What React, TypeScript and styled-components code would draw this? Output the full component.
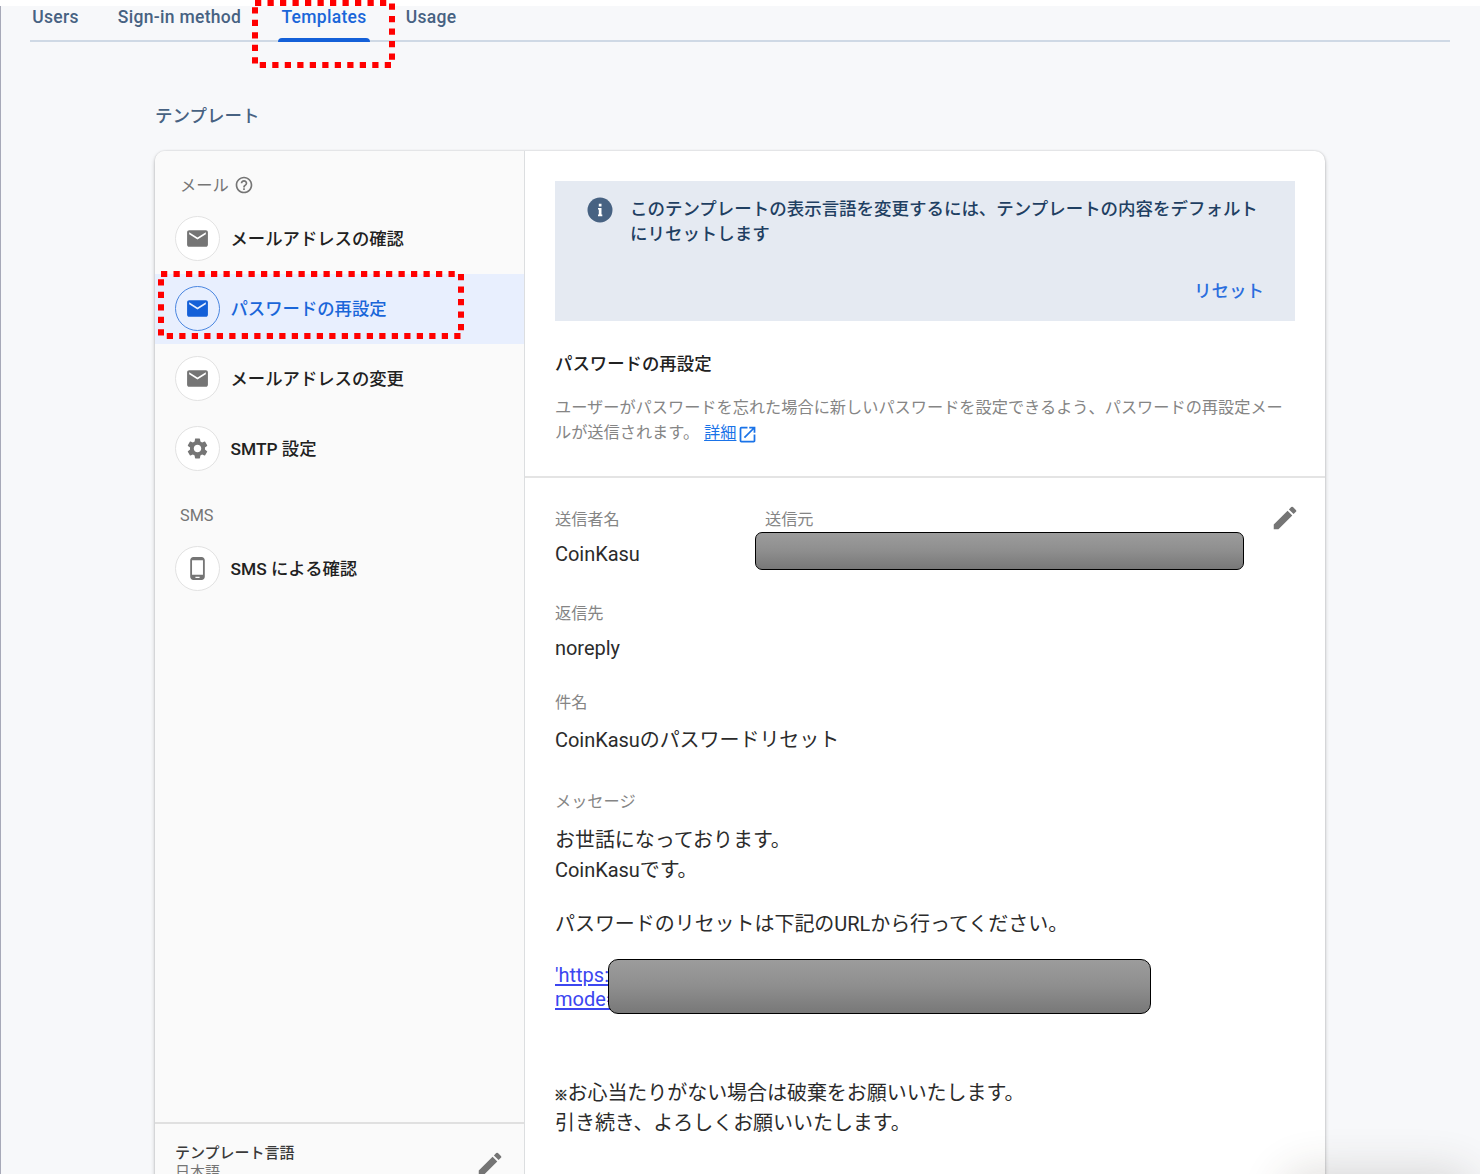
import React from "react";
import styled, { createGlobalStyle, css } from "styled-components";
import {
  MdEdit,
  MdEmail,
  MdHelpOutline,
  MdOpenInNew,
  MdPhoneAndroid,
  MdSettings,
} from "react-icons/md";

const GlobalStyle = createGlobalStyle`
  *, *::before, *::after { box-sizing: border-box; }
  body {
    margin: 0;
    overflow: hidden;
    background: #fff;
    font-family: Roboto, "Noto Sans CJK JP", sans-serif;
    color: #212121;
  }
  svg { display: block; flex: none; }
  p, h1, h2 { margin: 0; font-weight: 400; }
`;

const Screen = styled.div`
  position: relative;
  width: 1480px;
  height: 1174px;
  padding-top: 6px;
  overflow: hidden;
`;

const Page = styled.main`
  height: 1168px;
  border-left: 1px solid #a7a9b8;
  background: #f7f8fa;
  overflow: hidden;
`;

const TabBar = styled.nav`
  display: flex;
  gap: 33px;
  height: 36px;
  margin: 0 30px 0 29px;
  border-bottom: 2px solid #cfd9e5;
`;

const Tab = styled.a<{ $width: number; $active?: boolean }>`
  width: ${(p) => p.$width}px;
  height: 36px;
  text-align: center;
  white-space: nowrap;
  font-size: 17.5px;
  font-weight: 500;
  line-height: 22px;
  letter-spacing: 0.3px;
  color: ${(p) => (p.$active ? "#1a66d9" : "#476282")};
  ${(p) =>
    p.$active &&
    css`
      &::after {
        content: "";
        display: block;
        height: 4px;
        margin-top: 10px;
        border-radius: 4px 4px 0 0;
        background: #1460d8;
      }
    `}
`;

const PageTitle = styled.h1`
  margin: 61px 0 0 154px;
  font-size: 17.5px;
  font-weight: 500;
  line-height: 26px;
  color: #476282;
`;

const Card = styled.section`
  display: flex;
  width: 1170px;
  height: 1100px;
  margin: 22px 0 0 154px;
  border-radius: 10px;
  background: #fff;
  box-shadow: 0 0 2px rgba(0, 0, 0, 0.18), 0 2px 4px rgba(0, 0, 0, 0.22);
  overflow: hidden;
`;

const Sidebar = styled.aside`
  display: flex;
  flex-direction: column;
  width: 370px;
  flex: none;
  padding-top: 20px;
  border-right: 1px solid #dcdee0;
  background: #fafafa;
`;

const GroupLabel = styled.div<{ $top?: number; $bottom?: number }>`
  display: flex;
  align-items: center;
  gap: 5px;
  height: 28px;
  margin: ${(p) => p.$top ?? 0}px 0 ${(p) => p.$bottom ?? 5}px 25px;
  font-size: 16.25px;
  color: #757575;
  span { margin-top: -2px; }
`;

const NavRow = styled.a<{ $active?: boolean }>`
  display: flex;
  align-items: center;
  gap: 10.5px;
  height: 70px;
  padding: 0 0 1px 20px;
  font-size: 17.35px;
  font-weight: 500;
  color: ${(p) => (p.$active ? "#1a66d9" : "#212121")};
  background: ${(p) => (p.$active ? "#e8effe" : "transparent")};
`;

const NavLabel = styled.span`
  padding-bottom: 3px;
`;

const RoundIcon = styled.span<{ $active?: boolean }>`
  display: flex;
  align-items: center;
  justify-content: center;
  width: 45px;
  height: 45px;
  border: ${(p) => (p.$active ? "1.5px solid #4a86e0" : "1.25px solid #e2e2e2")};
  border-radius: 50%;
  background: ${(p) => (p.$active ? "#e8effe" : "#fff")};
  color: ${(p) => (p.$active ? "#1460d8" : "#757575")};
`;

const LanguageBar = styled.div`
  display: flex;
  justify-content: space-between;
  height: 129px;
  margin-top: auto;
  padding: 18px 19px 0 20px;
  border-top: 2px solid #e0e0e0;
  font-size: 15px;
  line-height: 18.75px;
  color: #757575;
  svg { margin-top: 7px; }
`;

const LanguageName = styled.p`
  line-height: 22px;
  margin-bottom: -1px;
  font-weight: 500;
  color: #3a3a3a;
`;

const Detail = styled.div`
  flex: 1;
  min-width: 0;
  padding-top: 30px;
`;

const Banner = styled.div`
  display: flex;
  flex-direction: column;
  height: 140px;
  margin: 0 30px;
  padding: 14px 32px 0 30px;
  background: #e5eaf2;
`;

const BannerMessage = styled.div`
  display: flex;
  gap: 15px;
  color: #1f3f62;
  font-size: 17.48px;
  font-weight: 500;
  line-height: 25px;
  white-space: nowrap;
  p { margin: 2px -10px 0 0; font-weight: 500; }
`;

const ResetButton = styled.a`
  align-self: flex-end;
  margin: 31px -1px 0 0;
  font-size: 17.5px;
  font-weight: 500;
  line-height: 26px;
  color: #2a6ede;
`;

const Summary = styled.div`
  height: 157px;
  padding: 30px 30px 0;
  border-bottom: 2px solid #e4e4e4;
`;

const SummaryTitle = styled.h2`
  font-size: 17.4px;
  font-weight: 500;
  line-height: 26px;
`;

const SummaryText = styled.p`
  margin-top: 18px;
  font-size: 16.2px;
  line-height: 25px;
  color: #858585;
  white-space: nowrap;
`;

const MoreLink = styled.a`
  display: inline-flex;
  align-items: center;
  gap: 1px;
  height: 25px;
  margin-left: 5px;
  vertical-align: top;
  color: #1a73e8;
  span { text-decoration: underline; text-underline-offset: 2px; }
  svg { margin-top: 4px; }
`;

const Fields = styled.div`
  padding: 29px 30px 0;
`;

const SenderRow = styled.div`
  display: flex;
  height: 94px;
  svg { margin-top: -4px; }
`;

const Field = styled.div<{ $width?: number; $height?: number }>`
  width: ${(p) => (p.$width ? `${p.$width}px` : "auto")};
  height: ${(p) => (p.$height ? `${p.$height}px` : "auto")};
  flex: none;
`;

const FieldLabel = styled.p<{ $inset?: number }>`
  padding-left: ${(p) => p.$inset ?? 0}px;
  font-size: 16.2px;
  line-height: 26px;
  color: #858585;
`;

const FieldValue = styled.p<{ $top?: number }>`
  margin-top: ${(p) => p.$top ?? 6}px;
  font-size: 20px;
  line-height: 30px;
  letter-spacing: -0.05px;
  color: #2b2b2b;
  white-space: nowrap;
`;

const Redaction = styled.div<{ $width: number; $height: number; $radius: number }>`
  width: ${(p) => p.$width}px;
  height: ${(p) => p.$height}px;
  flex: none;
  border: 1px solid #000;
  border-radius: ${(p) => p.$radius}px;
  background: linear-gradient(#9c9c9c, #8e8e8e 50%, #787878);
`;

const SenderAddress = styled(Redaction)`
  margin-top: -1px;
`;

const EditIcon = styled(MdEdit)`
  color: #757575;
`;

const UrlRow = styled.div`
  display: flex;
  margin-top: 20px;
`;

const UrlText = styled.a`
  width: 53px;
  height: 55px;
  flex: none;
  padding-top: 4px;
  white-space: nowrap;
  font-size: 20px;
  line-height: 24px;
  color: #3c46f0;
  text-decoration: underline;
  text-underline-offset: 2px;
`;

const ReferenceMark = styled.span`
  display: inline-block;
  width: 12.5px;
  font-size: 14px;
  font-weight: 700;
  line-height: 1;
  text-indent: -1px;
  -webkit-text-stroke: 0.5px currentColor;
`;

const Highlights = styled.svg`
  position: absolute;
  inset: 0;
  pointer-events: none;
`;

const CornerShade = styled.div`
  position: absolute;
  right: 12px;
  bottom: -62px;
  width: 180px;
  height: 60px;
  border-radius: 20px;
  box-shadow: 0 0 44px 6px rgba(60, 50, 40, 0.16);
`;

const InfoIcon = () => (
  <svg width="30" height="30" viewBox="0 0 30 30">
    <circle cx="15" cy="15" r="12.5" fill="#476282" />
    <path d="M13.8 8.8h2.7v2.7h-2.7zM13 13h3.5v6.6h.8v1.6h-4.3v-1.6h.8v-5h-.8z" fill="#fff" />
  </svg>
);

type NavItem = { label: string; Icon: typeof MdEmail; active?: boolean };

const mailItems: NavItem[] = [
  { label: "メールアドレスの確認", Icon: MdEmail },
  { label: "パスワードの再設定", Icon: MdEmail, active: true },
  { label: "メールアドレスの変更", Icon: MdEmail },
  { label: "SMTP 設定", Icon: MdSettings },
];

const smsItems: NavItem[] = [{ label: "SMS による確認", Icon: MdPhoneAndroid }];

const NavList = ({ items }: { items: NavItem[] }) => (
  <>
    {items.map(({ label, Icon, active }) => (
      <NavRow key={label} $active={active}>
        <RoundIcon $active={active}>
          <Icon size={25} />
        </RoundIcon>
        <NavLabel>{label}</NavLabel>
      </NavRow>
    ))}
  </>
);

export default function App() {
  return (
    <>
      <GlobalStyle />
      <Screen>
        <Page>
          <TabBar>
            <Tab $width={51}>Users</Tab>
            <Tab $width={131}>Sign-in method</Tab>
            <Tab $width={92} $active>
              Templates
            </Tab>
            <Tab $width={56}>Usage</Tab>
          </TabBar>
          <PageTitle>テンプレート</PageTitle>
          <Card>
            <Sidebar>
              <GroupLabel>
                <span>メール</span>
                <MdHelpOutline size={20} />
              </GroupLabel>
              <NavList items={mailItems} />
              <GroupLabel $top={18} $bottom={4}>
                <span>SMS</span>
              </GroupLabel>
              <NavList items={smsItems} />
              <LanguageBar>
                <div>
                  <LanguageName>テンプレート言語</LanguageName>
                  日本語
                </div>
                <EditIcon size={30} />
              </LanguageBar>
            </Sidebar>
            <Detail>
              <Banner>
                <BannerMessage>
                  <InfoIcon />
                  <p>
                    このテンプレートの表示言語を変更するには、テンプレートの内容をデフォルト
                    <br />
                    にリセットします
                  </p>
                </BannerMessage>
                <ResetButton>リセット</ResetButton>
              </Banner>
              <Summary>
                <SummaryTitle>パスワードの再設定</SummaryTitle>
                <SummaryText>
                  ユーザーがパスワードを忘れた場合に新しいパスワードを設定できるよう、パスワードの再設定メー
                  <br />
                  ルが送信されます。
                  <MoreLink>
                    <span>詳細</span>
                    <MdOpenInNew size={21} />
                  </MoreLink>
                </SummaryText>
              </Summary>
              <Fields>
                <SenderRow>
                  <Field $width={200}>
                    <FieldLabel>送信者名</FieldLabel>
                    <FieldValue>CoinKasu</FieldValue>
                  </Field>
                  <Field $width={515}>
                    <FieldLabel $inset={10}>送信元</FieldLabel>
                    <SenderAddress $width={489} $height={38} $radius={7} />
                  </Field>
                  <EditIcon size={30} />
                </SenderRow>
                <Field $height={89}>
                  <FieldLabel>返信先</FieldLabel>
                  <FieldValue>noreply</FieldValue>
                </Field>
                <Field $height={99}>
                  <FieldLabel>件名</FieldLabel>
                  <FieldValue $top={9}>CoinKasuのパスワードリセット</FieldValue>
                </Field>
                <Field>
                  <FieldLabel>メッセージ</FieldLabel>
                  <FieldValue $top={10}>
                    お世話になっております。
                    <br />
                    CoinKasuです。
                  </FieldValue>
                  <FieldValue $top={24}>パスワードのリセットは下記のURLから行ってください。</FieldValue>
                  <UrlRow>
                    <UrlText>
                      'https:
                      <br />
                      mode=
                    </UrlText>
                    <Redaction $width={543} $height={55} $radius={10} />
                  </UrlRow>
                  <FieldValue $top={64}>
                    <ReferenceMark>※</ReferenceMark>お心当たりがない場合は破棄をお願いいたします。
                    <br />
                    引き続き、よろしくお願いいたします。
                  </FieldValue>
                </Field>
              </Fields>
            </Detail>
          </Card>
        </Page>
        <CornerShade />
        <Highlights width="1480" height="1174" fill="none" stroke="#f00" strokeWidth="6">
          <path d="M255 3H392V65H255Z" strokeDasharray="6.25 6.25" />
          <path d="M161 274H461V336H161Z" strokeDasharray="6.25 6.25" />
        </Highlights>
      </Screen>
    </>
  );
}
